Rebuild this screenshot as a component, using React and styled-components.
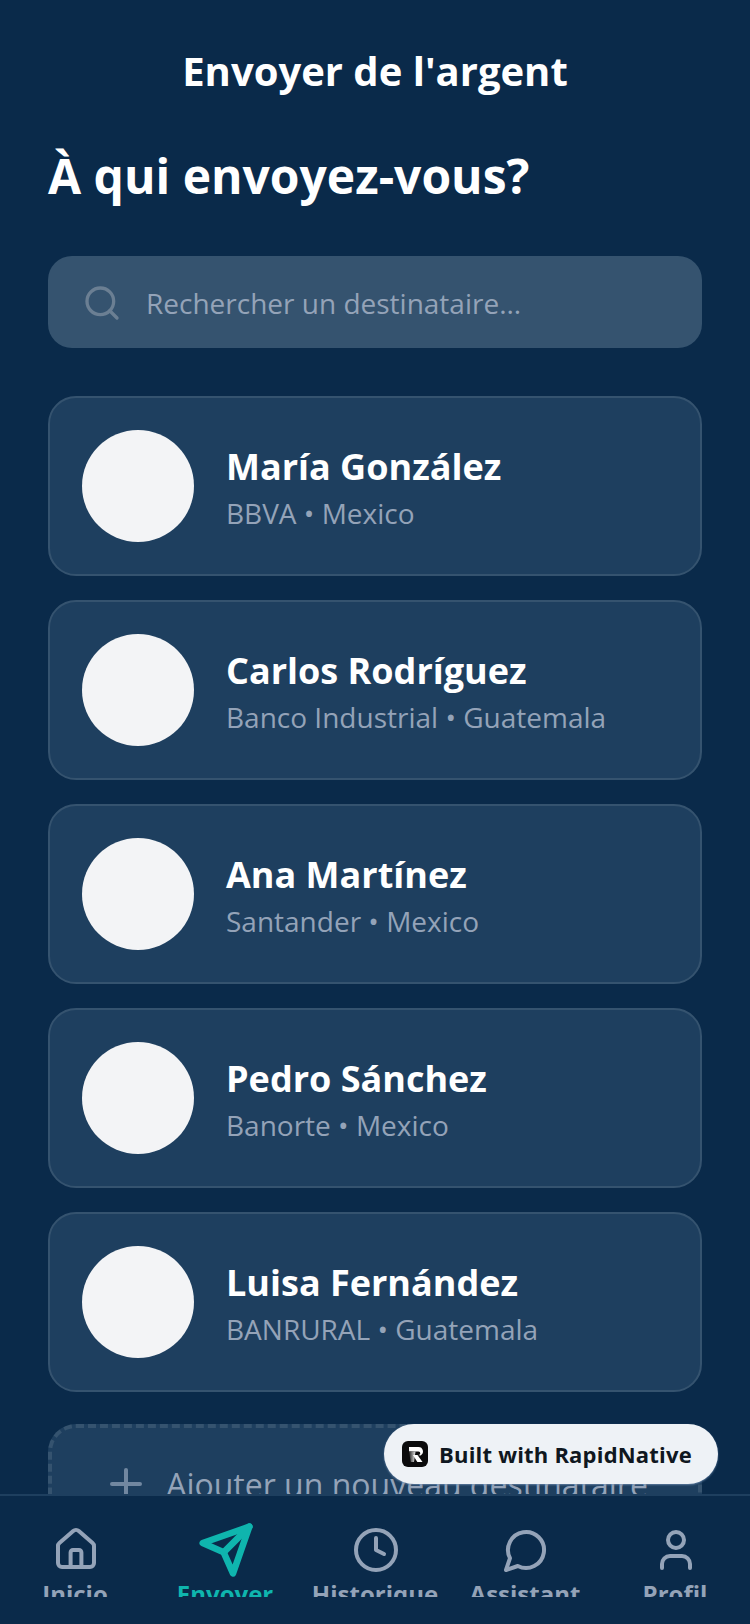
import React from "react";
import styled, { createGlobalStyle } from "styled-components";
import { Clock, Plus, Search, User } from "lucide-react";

const recipients = [
  { name: "María González", bank: "BBVA", country: "Mexico" },
  { name: "Carlos Rodríguez", bank: "Banco Industrial", country: "Guatemala" },
  { name: "Ana Martínez", bank: "Santander", country: "Mexico" },
  { name: "Pedro Sánchez", bank: "Banorte", country: "Mexico" },
  { name: "Luisa Fernández", bank: "BANRURAL", country: "Guatemala" },
];

const HomeIcon = (props) => (
  <svg viewBox="0 0 24 24" width="48" height="48" fill="none" stroke="currentColor" strokeWidth="2" strokeLinecap="round" strokeLinejoin="round" {...props}>
    <path d="M3 10a2 2 0 0 1 .7-1.5l6.9-6a2.1 2.1 0 0 1 2.8 0l6.9 6a2 2 0 0 1 .7 1.5v8.5a2 2 0 0 1-2 2H5a2 2 0 0 1-2-2z" />
    <path d="M9.3 20.5V13.2a1.2 1.2 0 0 1 1.2-1.2h3a1.2 1.2 0 0 1 1.2 1.2v7.3" />
  </svg>
);

const SendIcon = (props) => (
  <svg viewBox="0 0 24 24" width="56" height="56" fill="none" stroke="currentColor" strokeWidth="2.8" strokeLinecap="round" strokeLinejoin="round" {...props}>
    <path d="m22 2-7 20-4-9-9-4Z" />
    <path d="M22 2 11 13" />
  </svg>
);

const ChatIcon = (props) => (
  <svg viewBox="0 0 24 24" width="48" height="48" fill="none" stroke="currentColor" strokeWidth="2" strokeLinecap="round" strokeLinejoin="round" {...props}>
    <path d="M7.9 20A9 9 0 1 0 4 16.1L2 22Z" />
  </svg>
);

const tabs = [
  { label: "Inicio", icon: HomeIcon },
  { label: "Envoyer", icon: SendIcon, active: true },
  { label: "Historique", icon: Clock },
  { label: "Assistant", icon: ChatIcon },
  { label: "Profil", icon: User },
];

const GlobalStyle = createGlobalStyle`
  html, body {
    margin: 0;
    padding: 0;
    background: #0a2a4a;
  }
  * {
    box-sizing: border-box;
  }
`;

const App = () => {
  return (
    <Screen>
      <GlobalStyle />
      <Content>
        <Title>Envoyer de l'argent</Title>
        <Question>À qui envoyez-vous?</Question>
        <SearchBar>
          <Search size={40} color="#6b7f93" strokeWidth={2} />
          <SearchText>Rechercher un destinataire...</SearchText>
        </SearchBar>
        <List>
          {recipients.map((r) => (
            <Card key={r.name}>
              <Avatar />
              <div>
                <Name>{r.name}</Name>
                <Bank>
                  {r.bank} • {r.country}
                </Bank>
              </div>
            </Card>
          ))}
          <AddCard>
            <Plus size={48} color="#7187a0" strokeWidth={2} />
            <AddText>Ajouter un nouveau destinataire</AddText>
          </AddCard>
        </List>
      </Content>
      <TabBar>
        {tabs.map(({ label, icon: Icon, active }) => (
          <Tab key={label} $active={active}>
            <TabIcon>
              <Icon size={48} />
            </TabIcon>
            <TabLabel>{label}</TabLabel>
          </Tab>
        ))}
      </TabBar>
      <Badge>
        <BadgeLogo viewBox="0 0 26 26">
          <defs>
            <linearGradient id="stem" x1="0" x2="1" y1="0" y2="0">
              <stop offset="0" stopColor="#222" />
              <stop offset="1" stopColor="#e8e8e8" />
            </linearGradient>
          </defs>
          <rect width="26" height="26" rx="6" fill="#0b0b0c" />
          <path d="M7 6h9.5a4.5 4.5 0 0 1 2.2 8.4L15.5 14h1a1.8 1.8 0 0 0 0-3.6H7z" fill="#fff" />
          <path d="M7 10.4h6.5L12 21H8.8z" fill="url(#stem)" />
          <path d="M11 14h4.5l5 7h-5.2z" fill="#fff" />
        </BadgeLogo>
        Built with RapidNative
      </Badge>
    </Screen>
  );
};

const Screen = styled.div`
  position: relative;
  width: 750px;
  height: 1624px;
  display: flex;
  flex-direction: column;
  overflow: hidden;
  background: #0a2a4a;
  font-family: "Open Sans", sans-serif;
`;

const Content = styled.div`
  flex: 1;
  min-height: 0;
  overflow: hidden;
  padding: 0 48px;
`;

const Title = styled.h1`
  margin: 44px 0 0;
  font-size: 40px;
  line-height: 54px;
  font-weight: 700;
  color: #fff;
  text-align: center;
`;

const Question = styled.h2`
  margin: 46px 0 0;
  font-size: 48px;
  line-height: 64px;
  font-weight: 700;
  color: #fff;
`;

const SearchBar = styled.div`
  margin-top: 48px;
  height: 92px;
  display: flex;
  align-items: center;
  gap: 24px;
  padding: 2px 34px 0;
  border-radius: 24px;
  background: #35536f;
`;

const SearchText = styled.span`
  font-size: 28px;
  color: #94a3b8;
`;

const List = styled.div`
  margin-top: 48px;
  display: flex;
  flex-direction: column;
  gap: 24px;
`;

const Card = styled.div`
  height: 180px;
  display: flex;
  align-items: center;
  gap: 32px;
  padding: 0 32px;
  border: 2px solid #35536f;
  border-radius: 28px;
  background: #1e3f5f;
`;

const Avatar = styled.div`
  width: 112px;
  height: 112px;
  flex-shrink: 0;
  border-radius: 50%;
  background: #f3f4f6;
`;

const Name = styled.div`
  font-size: 36px;
  line-height: 54px;
  font-weight: 700;
  color: #fff;
`;

const Bank = styled.div`
  font-size: 28px;
  line-height: 38px;
  color: #94a3b8;
`;

const AddCard = styled.div`
  margin-top: 8px;
  height: 120px;
  flex-shrink: 0;
  display: flex;
  align-items: center;
  justify-content: center;
  gap: 16px;
  border: 4px dashed #35536f;
  border-radius: 28px;
  background: #1e3f5f;
`;

const AddText = styled.span`
  font-size: 32px;
  color: #94a3b8;
`;

const TabBar = styled.div`
  height: 130px;
  flex-shrink: 0;
  display: flex;
  justify-content: space-around;
  padding-top: 26px;
  border-top: 2px solid #1e3f5f;
  background: #0a2a4a;
`;

const Tab = styled.div`
  width: 150px;
  height: 75px;
  display: flex;
  flex-direction: column;
  align-items: center;
  overflow: hidden;
  color: ${({ $active }) => ($active ? "#0fb5ae" : "#94a3b8")};
`;

const TabIcon = styled.div`
  height: 56px;
  flex-shrink: 0;
  padding-left: 2px;
  display: flex;
  align-items: center;
  justify-content: center;
`;

const TabLabel = styled.span`
  font-size: 24px;
  line-height: 32px;
  font-weight: 700;
`;

const Badge = styled.div`
  position: absolute;
  left: 384px;
  top: 1424px;
  width: 334px;
  height: 60px;
  display: flex;
  align-items: center;
  gap: 11px;
  padding-left: 18px;
  border-radius: 30px;
  background: #eef2f6;
  box-shadow: 0 1px 2px rgba(120, 150, 185, 0.7);
  color: #0f1720;
  font-size: 22px;
  font-weight: 700;
  letter-spacing: 0.2px;
`;

const BadgeLogo = styled.svg`
  width: 26px;
  height: 26px;
  flex-shrink: 0;
`;

export default App;
